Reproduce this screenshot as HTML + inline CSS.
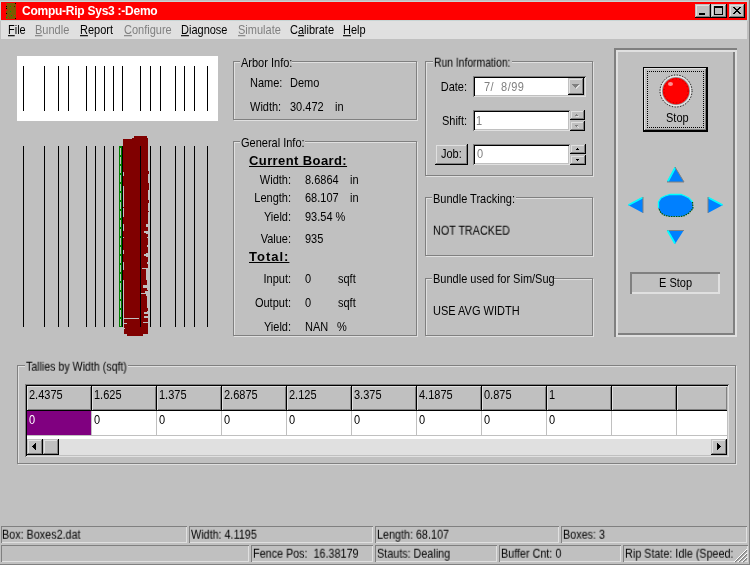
<!DOCTYPE html><html><head><meta charset="utf-8"><style>
*{margin:0;padding:0;box-sizing:content-box}
html,body{width:750px;height:565px;overflow:hidden;background:#c0c0c0}
body{position:relative;font-family:"Liberation Sans",sans-serif;font-size:11px;color:#000}
.t{will-change:transform;position:absolute;white-space:pre;line-height:13px;font-size:11px;transform:scaleY(1.125);transform-origin:0 10px}
.u{text-decoration:underline}
.dis{color:#808080}
</style></head><body>
<div style="position:absolute;left:0px;top:0px;width:750px;height:1px;background:#c0c0c0"></div>
<div style="position:absolute;left:0px;top:1px;width:748px;height:20px;background:#c8d4d4"></div>
<div style="position:absolute;left:749px;top:0px;width:1px;height:565px;background:#808080"></div>
<div style="position:absolute;left:0px;top:564px;width:750px;height:1px;background:#808080"></div>
<div style="position:absolute;left:1px;top:2px;width:746px;height:18px;background:#ff0000"></div>
<svg style="position:absolute;left:5px;top:2px" width="13" height="18" viewBox="0 0 13 18">
<polygon points="1,1 11,1 11,17 1,17 1,14 2,13 1,12 1,9 3,8 1,6 1,4 2,3" fill="#7c5a00"/>
<rect x="10" y="1" width="1" height="1" fill="#000"/><rect x="1" y="4" width="1" height="1" fill="#000"/>
<rect x="1" y="6" width="1" height="1" fill="#000"/><rect x="1" y="11" width="1" height="1" fill="#000"/>
<rect x="10" y="16" width="1" height="1" fill="#000"/><rect x="5" y="4" width="1" height="1" fill="#00a000"/>
<rect x="5" y="9" width="1" height="1" fill="#00a000"/><rect x="6" y="13" width="1" height="1" fill="#00a000"/>
<rect x="9" y="4" width="1" height="1" fill="#600000"/><rect x="9" y="13" width="1" height="1" fill="#ff0000"/>
<rect x="1" y="15" width="1" height="1" fill="#00a000"/><rect x="3" y="15" width="1" height="1" fill="#ff0000"/>
</svg>
<div class="t" style="left:22px;top:5px;color:#fff;font-weight:bold;font-size:12px;letter-spacing:-0.25px;transform:none">Compu-Rip Sys3 :-Demo</div>
<div style="position:absolute;left:695px;top:4px;width:16px;height:14px;background:#c0c0c0;box-shadow:inset -1px -1px #000,inset 1px 1px #c0c0c0,inset -2px -2px #808080,inset 2px 2px #e0e0e0"><div style="position:absolute;left:4px;top:9px;width:6px;height:2px;background:#000"></div></div>
<div style="position:absolute;left:711px;top:4px;width:16px;height:14px;background:#c0c0c0;box-shadow:inset -1px -1px #000,inset 1px 1px #c0c0c0,inset -2px -2px #808080,inset 2px 2px #e0e0e0"><div style="position:absolute;left:3px;top:2px;width:7px;height:6px;border:1px solid #000;border-top-width:2px"></div></div>
<div style="position:absolute;left:729px;top:4px;width:16px;height:14px;background:#c0c0c0;box-shadow:inset -1px -1px #000,inset 1px 1px #c0c0c0,inset -2px -2px #808080,inset 2px 2px #e0e0e0"></div>
<svg style="position:absolute;left:0;top:0;overflow:visible" width="1" height="1" shape-rendering="crispEdges"><rect x="733" y="7" width="2" height="1" fill="#000"/><rect x="739" y="7" width="2" height="1" fill="#000"/><rect x="734" y="8" width="2" height="1" fill="#000"/><rect x="738" y="8" width="2" height="1" fill="#000"/><rect x="735" y="9" width="4" height="1" fill="#000"/><rect x="736" y="10" width="2" height="1" fill="#000"/><rect x="735" y="11" width="4" height="1" fill="#000"/><rect x="734" y="12" width="2" height="1" fill="#000"/><rect x="738" y="12" width="2" height="1" fill="#000"/><rect x="733" y="13" width="2" height="1" fill="#000"/><rect x="739" y="13" width="2" height="1" fill="#000"/></svg>
<div style="position:absolute;left:1px;top:21px;width:746px;height:18px;background:#e0e0e0"></div>
<div class="t " style="left:8px;top:24px"><span class="u">F</span>ile</div>
<div class="t dis" style="left:35px;top:24px"><span class="u">B</span>undle</div>
<div class="t " style="left:80px;top:24px"><span class="u">R</span>eport</div>
<div class="t dis" style="left:124px;top:24px"><span class="u">C</span>onfigure</div>
<div class="t " style="left:181px;top:24px"><span class="u">D</span>iagnose</div>
<div class="t dis" style="left:238px;top:24px"><span class="u">S</span>imulate</div>
<div class="t " style="left:290px;top:24px">C<span class="u">a</span>librate</div>
<div class="t " style="left:343px;top:24px"><span class="u">H</span>elp</div>
<div style="position:absolute;left:17px;top:56px;width:201px;height:65px;background:#fff"></div>
<div style="position:absolute;left:23px;top:66px;width:1px;height:45px;background:#000"></div>
<div style="position:absolute;left:44px;top:66px;width:1px;height:45px;background:#000"></div>
<div style="position:absolute;left:58px;top:66px;width:1px;height:45px;background:#000"></div>
<div style="position:absolute;left:68px;top:66px;width:1px;height:45px;background:#000"></div>
<div style="position:absolute;left:86px;top:66px;width:1px;height:45px;background:#000"></div>
<div style="position:absolute;left:95px;top:66px;width:1px;height:45px;background:#000"></div>
<div style="position:absolute;left:104px;top:66px;width:1px;height:45px;background:#000"></div>
<div style="position:absolute;left:113px;top:66px;width:1px;height:45px;background:#000"></div>
<div style="position:absolute;left:122px;top:66px;width:1px;height:45px;background:#000"></div>
<div style="position:absolute;left:140px;top:66px;width:1px;height:45px;background:#000"></div>
<div style="position:absolute;left:150px;top:66px;width:1px;height:45px;background:#000"></div>
<div style="position:absolute;left:160px;top:66px;width:1px;height:45px;background:#000"></div>
<div style="position:absolute;left:175px;top:66px;width:1px;height:45px;background:#000"></div>
<div style="position:absolute;left:184px;top:66px;width:1px;height:45px;background:#000"></div>
<div style="position:absolute;left:194px;top:66px;width:1px;height:45px;background:#000"></div>
<div style="position:absolute;left:207px;top:66px;width:1px;height:45px;background:#000"></div>
<svg style="position:absolute;left:0;top:0" width="230" height="345" shape-rendering="crispEdges">
<rect x="134" y="136" width="13" height="2" fill="#800000"/>
<rect x="132" y="138" width="16" height="1" fill="#800000"/>
<rect x="123" y="139" width="25" height="10" fill="#800000"/>
<rect x="123" y="149" width="25" height="22" fill="#800000"/>
<rect x="123" y="171" width="26" height="3" fill="#800000"/>
<rect x="123" y="174" width="25" height="9" fill="#800000"/>
<rect x="123" y="183" width="26" height="7" fill="#800000"/>
<rect x="123" y="190" width="25" height="10" fill="#800000"/>
<rect x="123" y="200" width="26" height="3" fill="#800000"/>
<rect x="123" y="203" width="25" height="8" fill="#800000"/>
<rect x="123" y="211" width="26" height="1" fill="#800000"/>
<rect x="123" y="212" width="25" height="12" fill="#800000"/>
<rect x="123" y="224" width="23" height="3" fill="#800000"/>
<rect x="123" y="227" width="25" height="4" fill="#800000"/>
<rect x="123" y="231" width="21" height="2" fill="#800000"/>
<rect x="123" y="233" width="23" height="1" fill="#800000"/>
<rect x="123" y="234" width="25" height="3" fill="#800000"/>
<rect x="123" y="237" width="24" height="1" fill="#800000"/>
<rect x="123" y="238" width="25" height="7" fill="#800000"/>
<rect x="123" y="245" width="24" height="2" fill="#800000"/>
<rect x="123" y="247" width="25" height="6" fill="#800000"/>
<rect x="123" y="253" width="23" height="1" fill="#800000"/>
<rect x="123" y="254" width="21" height="2" fill="#800000"/>
<rect x="123" y="256" width="23" height="1" fill="#800000"/>
<rect x="123" y="257" width="25" height="5" fill="#800000"/>
<rect x="123" y="262" width="24" height="2" fill="#800000"/>
<rect x="123" y="264" width="25" height="4" fill="#800000"/>
<rect x="123" y="268" width="19" height="1" fill="#800000"/>
<rect x="123" y="269" width="23" height="2" fill="#800000"/>
<rect x="123" y="271" width="23" height="9" fill="#800000"/>
<rect x="124" y="280" width="23" height="5" fill="#800000"/>
<rect x="124" y="285" width="19" height="3" fill="#800000"/>
<rect x="124" y="288" width="23" height="2" fill="#800000"/>
<rect x="124" y="290" width="24" height="1" fill="#800000"/>
<rect x="124" y="291" width="21" height="2" fill="#800000"/>
<rect x="124" y="293" width="17" height="1" fill="#800000"/>
<rect x="124" y="294" width="22" height="2" fill="#800000"/>
<rect x="124" y="296" width="23" height="12" fill="#800000"/>
<rect x="124" y="308" width="24" height="3" fill="#800000"/>
<rect x="124" y="311" width="23" height="1" fill="#800000"/>
<rect x="124" y="312" width="20" height="2" fill="#800000"/>
<rect x="124" y="314" width="24" height="2" fill="#800000"/>
<rect x="124" y="316" width="20" height="2" fill="#800000"/>
<rect x="124" y="318" width="24" height="4" fill="#800000"/>
<rect x="124" y="322" width="19" height="1" fill="#800000"/>
<rect x="124" y="323" width="24" height="11" fill="#800000"/>
<rect x="127" y="334" width="16" height="2" fill="#800000"/>
<rect x="123" y="172" width="1" height="4" fill="#c0c0c0"/>
<rect x="123" y="186" width="1" height="21" fill="#c0c0c0"/>
<rect x="123" y="208" width="1" height="9" fill="#c0c0c0"/>
<rect x="123" y="224" width="1" height="7" fill="#c0c0c0"/>
<rect x="123" y="237" width="1" height="1" fill="#c0c0c0"/>
<rect x="123" y="250" width="1" height="4" fill="#c0c0c0"/>
<rect x="123" y="262" width="1" height="6" fill="#c0c0c0"/>
<rect x="123" y="268" width="1" height="2" fill="#c0c0c0"/>
<rect x="124" y="318" width="15" height="1" fill="#c0c0c0"/>
<rect x="124" y="323" width="3" height="1" fill="#c0c0c0"/><rect x="124" y="328" width="1" height="1" fill="#c0c0c0"/>
<rect x="119" y="146" width="3" height="181" fill="#008000"/>
<rect x="120" y="148" width="1" height="7" fill="#c0c0c0"/>
<rect x="120" y="157" width="1" height="7" fill="#c0c0c0"/>
<rect x="120" y="166" width="1" height="7" fill="#c0c0c0"/>
<rect x="120" y="175" width="1" height="7" fill="#c0c0c0"/>
<rect x="120" y="184" width="1" height="7" fill="#c0c0c0"/>
<rect x="120" y="193" width="1" height="7" fill="#c0c0c0"/>
<rect x="120" y="202" width="1" height="7" fill="#c0c0c0"/>
<rect x="120" y="211" width="1" height="7" fill="#c0c0c0"/>
<rect x="120" y="220" width="1" height="7" fill="#c0c0c0"/>
<rect x="120" y="229" width="1" height="7" fill="#c0c0c0"/>
<rect x="120" y="238" width="1" height="7" fill="#c0c0c0"/>
<rect x="120" y="247" width="1" height="7" fill="#c0c0c0"/>
<rect x="120" y="256" width="1" height="7" fill="#c0c0c0"/>
<rect x="120" y="265" width="1" height="7" fill="#c0c0c0"/>
<rect x="120" y="274" width="1" height="7" fill="#c0c0c0"/>
<rect x="120" y="283" width="1" height="7" fill="#c0c0c0"/>
<rect x="120" y="292" width="1" height="7" fill="#c0c0c0"/>
<rect x="120" y="301" width="1" height="7" fill="#c0c0c0"/>
<rect x="120" y="310" width="1" height="7" fill="#c0c0c0"/>
<rect x="120" y="319" width="1" height="7" fill="#c0c0c0"/>
</svg>
<div style="position:absolute;left:23px;top:146px;width:1px;height:181px;background:#000"></div>
<div style="position:absolute;left:44px;top:146px;width:1px;height:181px;background:#000"></div>
<div style="position:absolute;left:58px;top:146px;width:1px;height:181px;background:#000"></div>
<div style="position:absolute;left:68px;top:146px;width:1px;height:181px;background:#000"></div>
<div style="position:absolute;left:86px;top:146px;width:1px;height:181px;background:#000"></div>
<div style="position:absolute;left:95px;top:146px;width:1px;height:181px;background:#000"></div>
<div style="position:absolute;left:104px;top:146px;width:1px;height:181px;background:#000"></div>
<div style="position:absolute;left:113px;top:146px;width:1px;height:181px;background:#000"></div>
<div style="position:absolute;left:122px;top:146px;width:1px;height:181px;background:#000"></div>
<div style="position:absolute;left:140px;top:146px;width:1px;height:181px;background:#000"></div>
<div style="position:absolute;left:150px;top:146px;width:1px;height:181px;background:#000"></div>
<div style="position:absolute;left:160px;top:146px;width:1px;height:181px;background:#000"></div>
<div style="position:absolute;left:175px;top:146px;width:1px;height:181px;background:#000"></div>
<div style="position:absolute;left:184px;top:146px;width:1px;height:181px;background:#000"></div>
<div style="position:absolute;left:194px;top:146px;width:1px;height:181px;background:#000"></div>
<div style="position:absolute;left:207px;top:146px;width:1px;height:181px;background:#000"></div>
<div style="position:absolute;left:234px;top:62px;width:182px;height:57px;border:1px solid #e0e0e0"></div>
<div style="position:absolute;left:233px;top:61px;width:182px;height:57px;border:1px solid #808080"></div>
<div style="position:absolute;left:240px;top:59px;width:52px;height:5px;background:#c0c0c0"></div>
<div class="t" style="left:241px;top:57px;">Arbor Info:</div>
<div class="t" style="left:250px;top:77px;">Name:</div>
<div class="t" style="left:290px;top:77px;">Demo</div>
<div class="t" style="left:250px;top:101px;">Width:</div>
<div class="t" style="left:290px;top:101px;">30.472</div>
<div class="t" style="left:335px;top:101px;">in</div>
<div style="position:absolute;left:234px;top:142px;width:182px;height:193px;border:1px solid #e0e0e0"></div>
<div style="position:absolute;left:233px;top:141px;width:182px;height:193px;border:1px solid #808080"></div>
<div style="position:absolute;left:240px;top:139px;width:65px;height:5px;background:#c0c0c0"></div>
<div class="t" style="left:241px;top:137px;">General Info:</div>
<div class="t" style="left:249px;top:153px;font-weight:bold;font-size:13px;line-height:15px;text-decoration:underline;transform:none;letter-spacing:0.4px">Current Board:</div>
<div class="t" style="left:191px;top:174px;width:100px;text-align:right">Width:</div>
<div class="t" style="left:305px;top:174px;">8.6864</div>
<div class="t" style="left:350px;top:174px;">in</div>
<div class="t" style="left:191px;top:192px;width:100px;text-align:right">Length:</div>
<div class="t" style="left:305px;top:192px;">68.107</div>
<div class="t" style="left:350px;top:192px;">in</div>
<div class="t" style="left:191px;top:211px;width:100px;text-align:right">Yield:</div>
<div class="t" style="left:305px;top:211px;">93.54 %</div>
<div class="t" style="left:191px;top:233px;width:100px;text-align:right">Value:</div>
<div class="t" style="left:305px;top:233px;">935</div>
<div class="t" style="left:249px;top:249px;font-weight:bold;font-size:13px;line-height:15px;text-decoration:underline;transform:none;letter-spacing:1px">Total:</div>
<div class="t" style="left:191px;top:273px;width:100px;text-align:right">Input:</div>
<div class="t" style="left:305px;top:273px;">0</div>
<div class="t" style="left:338px;top:273px;">sqft</div>
<div class="t" style="left:191px;top:297px;width:100px;text-align:right">Output:</div>
<div class="t" style="left:305px;top:297px;">0</div>
<div class="t" style="left:338px;top:297px;">sqft</div>
<div class="t" style="left:191px;top:321px;width:100px;text-align:right">Yield:</div>
<div class="t" style="left:305px;top:321px;">NAN</div>
<div class="t" style="left:337px;top:321px;">%</div>
<div style="position:absolute;left:426px;top:62px;width:166px;height:113px;border:1px solid #e0e0e0"></div>
<div style="position:absolute;left:425px;top:61px;width:166px;height:113px;border:1px solid #808080"></div>
<div style="position:absolute;left:433px;top:59px;width:79px;height:5px;background:#c0c0c0"></div>
<div class="t" style="left:434px;top:57px;transform:scale(0.94,1.125)">Run Information:</div>
<div class="t" style="left:367px;top:81px;width:100px;text-align:right">Date:</div>
<div style="position:absolute;left:473px;top:76px;width:113px;height:21px;background:#fff;box-shadow:inset 1px 1px #808080,inset -1px -1px #e0e0e0,inset 2px 2px #000,inset -2px -2px #c0c0c0"></div>
<div style="position:absolute;left:568px;top:78px;width:16px;height:17px;background:#c0c0c0;box-shadow:inset -1px -1px #000,inset 1px 1px #c0c0c0,inset -2px -2px #808080,inset 2px 2px #e0e0e0"></div>
<svg style="position:absolute;left:0;top:0;overflow:visible" width="1" height="1" shape-rendering="crispEdges"><rect x="573" y="85" width="7" height="1" fill="#e0e0e0"/><rect x="574" y="86" width="5" height="1" fill="#e0e0e0"/><rect x="575" y="87" width="3" height="1" fill="#e0e0e0"/><rect x="576" y="88" width="1" height="1" fill="#e0e0e0"/></svg>
<svg style="position:absolute;left:0;top:0;overflow:visible" width="1" height="1" shape-rendering="crispEdges"><rect x="572" y="84" width="7" height="1" fill="#808080"/><rect x="573" y="85" width="5" height="1" fill="#808080"/><rect x="574" y="86" width="3" height="1" fill="#808080"/><rect x="575" y="87" width="1" height="1" fill="#808080"/></svg>
<div class="t" style="left:484px;top:81px;color:#808080;letter-spacing:0.45px">7/  8/99</div>
<div class="t" style="left:367px;top:115px;width:100px;text-align:right">Shift:</div>
<div style="position:absolute;left:473px;top:110px;width:97px;height:21px;background:#fff;box-shadow:inset 1px 1px #808080,inset -1px -1px #e0e0e0,inset 2px 2px #000,inset -2px -2px #c0c0c0"></div>
<div class="t" style="left:476px;top:115px;color:#808080">1</div>
<div style="position:absolute;left:570px;top:110px;width:15px;height:10px;background:#c0c0c0;box-shadow:inset -1px -1px #000,inset 1px 1px #c0c0c0,inset -2px -2px #808080,inset 2px 2px #e0e0e0"></div>
<div style="position:absolute;left:570px;top:121px;width:15px;height:10px;background:#c0c0c0;box-shadow:inset -1px -1px #000,inset 1px 1px #c0c0c0,inset -2px -2px #808080,inset 2px 2px #e0e0e0"></div>
<svg style="position:absolute;left:0;top:0;overflow:visible" width="1" height="1" shape-rendering="crispEdges"><rect x="576" y="116" width="3" height="1" fill="#e0e0e0"/></svg>
<svg style="position:absolute;left:0;top:0;overflow:visible" width="1" height="1" shape-rendering="crispEdges"><rect x="576" y="114" width="1" height="1" fill="#808080"/><rect x="575" y="115" width="3" height="1" fill="#808080"/></svg>
<svg style="position:absolute;left:0;top:0;overflow:visible" width="1" height="1" shape-rendering="crispEdges"><rect x="578" y="127" width="1" height="1" fill="#e0e0e0"/><rect x="577" y="126" width="1" height="1" fill="#e0e0e0"/></svg>
<svg style="position:absolute;left:0;top:0;overflow:visible" width="1" height="1" shape-rendering="crispEdges"><rect x="575" y="125" width="3" height="1" fill="#808080"/><rect x="576" y="126" width="1" height="1" fill="#808080"/></svg>
<div style="position:absolute;left:435px;top:144px;width:33px;height:21px;background:#c0c0c0;box-shadow:inset -1px -1px #000,inset 1px 1px #c0c0c0,inset -2px -2px #808080,inset 2px 2px #e0e0e0"></div>
<div class="t" style="left:441px;top:148px;">Job:</div>
<div style="position:absolute;left:473px;top:144px;width:97px;height:21px;background:#fff;box-shadow:inset 1px 1px #808080,inset -1px -1px #e0e0e0,inset 2px 2px #000,inset -2px -2px #c0c0c0"></div>
<div class="t" style="left:477px;top:148px;color:#808080">0</div>
<div style="position:absolute;left:570px;top:144px;width:16px;height:10px;background:#c0c0c0;box-shadow:inset -1px -1px #000,inset 1px 1px #c0c0c0,inset -2px -2px #808080,inset 2px 2px #e0e0e0"></div>
<div style="position:absolute;left:570px;top:155px;width:16px;height:10px;background:#c0c0c0;box-shadow:inset -1px -1px #000,inset 1px 1px #c0c0c0,inset -2px -2px #808080,inset 2px 2px #e0e0e0"></div>
<svg style="position:absolute;left:0;top:0;overflow:visible" width="1" height="1" shape-rendering="crispEdges"><rect x="577" y="148" width="1" height="1" fill="#000"/><rect x="576" y="149" width="3" height="1" fill="#000"/></svg>
<svg style="position:absolute;left:0;top:0;overflow:visible" width="1" height="1" shape-rendering="crispEdges"><rect x="576" y="159" width="3" height="1" fill="#000"/><rect x="577" y="160" width="1" height="1" fill="#000"/></svg>
<div style="position:absolute;left:426px;top:198px;width:166px;height:57px;border:1px solid #e0e0e0"></div>
<div style="position:absolute;left:425px;top:197px;width:166px;height:57px;border:1px solid #808080"></div>
<div style="position:absolute;left:432px;top:195px;width:84px;height:5px;background:#c0c0c0"></div>
<div class="t" style="left:433px;top:193px;">Bundle Tracking:</div>
<div class="t" style="left:433px;top:225px;transform:scale(0.98,1.125)">NOT TRACKED</div>
<div style="position:absolute;left:426px;top:279px;width:166px;height:56px;border:1px solid #e0e0e0"></div>
<div style="position:absolute;left:425px;top:278px;width:166px;height:56px;border:1px solid #808080"></div>
<div style="position:absolute;left:432px;top:276px;width:122px;height:5px;background:#c0c0c0"></div>
<div class="t" style="left:433px;top:273px;">Bundle used for Sim/Sug</div>
<div class="t" style="left:433px;top:305px;">USE AVG WIDTH</div>
<div style="position:absolute;left:614px;top:48px;width:123px;height:289px;box-shadow:inset 2px 2px #808080,inset -2px -2px #e0e0e0,inset 4px 4px #e0e0e0,inset -4px -4px #808080"></div>
<div style="position:absolute;left:643px;top:67px;width:65px;height:65px;background:#c0c0c0;box-shadow:inset -1px -1px #000,inset 1px 1px #000,inset -2px -2px #000,inset 2px 2px #e0e0e0,inset -3px -3px #808080"></div>
<div style="position:absolute;left:647px;top:71px;width:55px;height:55px;border:1px dotted #000"></div>
<svg style="position:absolute;left:655px;top:70px" width="42" height="42">
<circle cx="21" cy="21" r="16" fill="none" stroke="#000" stroke-width="1" stroke-dasharray="1.2 1.6"/><circle cx="21" cy="21" r="15.3" fill="#e8e8e8"/><circle cx="21" cy="21" r="14" fill="#949494"/><circle cx="21" cy="21" r="13.2" fill="#ff0000"/><circle cx="21" cy="21" r="12" fill="none" stroke="#900000" stroke-width="0.8" stroke-dasharray="1 2.5"/>
<ellipse cx="15.5" cy="14" rx="2.5" ry="2" fill="#ff9090"/>
</svg>
<div class="t" style="left:666px;top:112px;">Stop</div>
<svg style="position:absolute;left:620px;top:160px" width="110" height="90">
<polygon points="55,7 47,22 64,22" fill="#0080ff"/><path d="M55.3,7.5 L47.8,21.5" stroke="#00ffff" stroke-width="1.8"/><path d="M55,7 L64,22 L47,22" fill="none" stroke="#808080" stroke-width="1"/>
<polygon points="55,84 47,70 64,70" fill="#0080ff"/><path d="M47,70.5 L64,70.5" stroke="#808080" stroke-width="1"/><path d="M55,83.5 L47.5,70.5" stroke="#00ffff" stroke-width="1.8"/>
<polygon points="8,45 23,37 23,53" fill="#0080ff"/><path d="M8.5,45 L23,37.5" stroke="#00ffff" stroke-width="1.8"/><path d="M23,37 L23,53" stroke="#808080" stroke-width="1"/>
<polygon points="103,45 88,37 88,53" fill="#0080ff"/><path d="M102.5,45 L88,37.5" stroke="#00ffff" stroke-width="1.8"/><path d="M88,37 L88,53" stroke="#808080" stroke-width="1"/>
<polygon points="38.5,48.0 38.5,42.0 41.0,38.0 45.0,36.0 50.0,34.5 61.0,34.5 65.0,36.0 69.0,38.0 72.5,42.0 73.0,48.5 69.0,53.0 65.0,55.5 61.0,56.5 50.0,56.5 45.0,55.5 41.0,53.0" fill="#0080ff"/>
<path d="M38.5,48.0 L38.5,42.0 L41.0,38.0 L45.0,36.0 L50.0,34.5 L61.0,34.5 L65.0,36.0 L69.0,38.0 L72.5,42.0" fill="none" stroke="#00ffff" stroke-width="1.3"/>
<path d="M72.5,42.0 L73.0,48.5 L69.0,53.0 L65.0,55.5 L61.0,56.5 L50.0,56.5 L45.0,55.5 L41.0,53.0 L38.5,48.0" fill="none" stroke="#005800" stroke-width="1.2" stroke-dasharray="1.5 1"/>
</svg>
<div style="position:absolute;left:630px;top:272px;width:90px;height:22px;box-shadow:inset 2px 2px #808080,inset -2px -2px #e0e0e0"></div>
<div class="t" style="left:659px;top:277px;">E Stop</div>
<div style="position:absolute;left:18px;top:366px;width:717px;height:97px;border:1px solid #e0e0e0"></div>
<div style="position:absolute;left:17px;top:365px;width:717px;height:97px;border:1px solid #808080"></div>
<div style="position:absolute;left:25px;top:363px;width:103px;height:5px;background:#c0c0c0"></div>
<div class="t" style="left:26px;top:361px;transform:scale(0.965,1.125)">Tallies by Width (sqft)</div>
<div style="position:absolute;left:25px;top:384px;width:704px;height:73px;background:#fff;box-shadow:inset 1px 1px #808080,inset -1px -1px #e0e0e0,inset 2px 2px #000,inset -2px -2px #c0c0c0"></div>
<div style="position:absolute;left:27px;top:386px;width:64px;height:24px;background:#c0c0c0;box-shadow:inset 1px 1px #e0e0e0,inset -1px -1px #808080"></div>
<div class="t" style="left:29px;top:389px;">2.4375</div>
<div style="position:absolute;left:91px;top:386px;width:1px;height:24px;background:#000"></div>
<div style="position:absolute;left:27px;top:411px;width:64px;height:24px;background:#800080"></div>
<div class="t" style="left:29px;top:414px;color:#fff">0</div>
<div style="position:absolute;left:91px;top:411px;width:1px;height:24px;background:#c0c0c0"></div>
<div style="position:absolute;left:92px;top:386px;width:64px;height:24px;background:#c0c0c0;box-shadow:inset 1px 1px #e0e0e0,inset -1px -1px #808080"></div>
<div class="t" style="left:94px;top:389px;">1.625</div>
<div style="position:absolute;left:156px;top:386px;width:1px;height:24px;background:#000"></div>
<div class="t" style="left:94px;top:414px;">0</div>
<div style="position:absolute;left:156px;top:411px;width:1px;height:24px;background:#c0c0c0"></div>
<div style="position:absolute;left:157px;top:386px;width:64px;height:24px;background:#c0c0c0;box-shadow:inset 1px 1px #e0e0e0,inset -1px -1px #808080"></div>
<div class="t" style="left:159px;top:389px;">1.375</div>
<div style="position:absolute;left:221px;top:386px;width:1px;height:24px;background:#000"></div>
<div class="t" style="left:159px;top:414px;">0</div>
<div style="position:absolute;left:221px;top:411px;width:1px;height:24px;background:#c0c0c0"></div>
<div style="position:absolute;left:222px;top:386px;width:64px;height:24px;background:#c0c0c0;box-shadow:inset 1px 1px #e0e0e0,inset -1px -1px #808080"></div>
<div class="t" style="left:224px;top:389px;">2.6875</div>
<div style="position:absolute;left:286px;top:386px;width:1px;height:24px;background:#000"></div>
<div class="t" style="left:224px;top:414px;">0</div>
<div style="position:absolute;left:286px;top:411px;width:1px;height:24px;background:#c0c0c0"></div>
<div style="position:absolute;left:287px;top:386px;width:64px;height:24px;background:#c0c0c0;box-shadow:inset 1px 1px #e0e0e0,inset -1px -1px #808080"></div>
<div class="t" style="left:289px;top:389px;">2.125</div>
<div style="position:absolute;left:351px;top:386px;width:1px;height:24px;background:#000"></div>
<div class="t" style="left:289px;top:414px;">0</div>
<div style="position:absolute;left:351px;top:411px;width:1px;height:24px;background:#c0c0c0"></div>
<div style="position:absolute;left:352px;top:386px;width:64px;height:24px;background:#c0c0c0;box-shadow:inset 1px 1px #e0e0e0,inset -1px -1px #808080"></div>
<div class="t" style="left:354px;top:389px;">3.375</div>
<div style="position:absolute;left:416px;top:386px;width:1px;height:24px;background:#000"></div>
<div class="t" style="left:354px;top:414px;">0</div>
<div style="position:absolute;left:416px;top:411px;width:1px;height:24px;background:#c0c0c0"></div>
<div style="position:absolute;left:417px;top:386px;width:64px;height:24px;background:#c0c0c0;box-shadow:inset 1px 1px #e0e0e0,inset -1px -1px #808080"></div>
<div class="t" style="left:419px;top:389px;">4.1875</div>
<div style="position:absolute;left:481px;top:386px;width:1px;height:24px;background:#000"></div>
<div class="t" style="left:419px;top:414px;">0</div>
<div style="position:absolute;left:481px;top:411px;width:1px;height:24px;background:#c0c0c0"></div>
<div style="position:absolute;left:482px;top:386px;width:64px;height:24px;background:#c0c0c0;box-shadow:inset 1px 1px #e0e0e0,inset -1px -1px #808080"></div>
<div class="t" style="left:484px;top:389px;">0.875</div>
<div style="position:absolute;left:546px;top:386px;width:1px;height:24px;background:#000"></div>
<div class="t" style="left:484px;top:414px;">0</div>
<div style="position:absolute;left:546px;top:411px;width:1px;height:24px;background:#c0c0c0"></div>
<div style="position:absolute;left:547px;top:386px;width:64px;height:24px;background:#c0c0c0;box-shadow:inset 1px 1px #e0e0e0,inset -1px -1px #808080"></div>
<div class="t" style="left:549px;top:389px;">1</div>
<div style="position:absolute;left:611px;top:386px;width:1px;height:24px;background:#000"></div>
<div class="t" style="left:549px;top:414px;">0</div>
<div style="position:absolute;left:611px;top:411px;width:1px;height:24px;background:#c0c0c0"></div>
<div style="position:absolute;left:612px;top:386px;width:64px;height:24px;background:#c0c0c0;box-shadow:inset 1px 1px #e0e0e0,inset -1px -1px #808080"></div>
<div style="position:absolute;left:676px;top:386px;width:1px;height:24px;background:#000"></div>
<div style="position:absolute;left:676px;top:411px;width:1px;height:24px;background:#c0c0c0"></div>
<div style="position:absolute;left:677px;top:386px;width:50px;height:24px;background:#c0c0c0;box-shadow:inset 1px 1px #e0e0e0,inset -1px -1px #808080"></div>
<div style="position:absolute;left:27px;top:410px;width:700px;height:1px;background:#000"></div>
<div style="position:absolute;left:27px;top:435px;width:700px;height:1px;background:#c0c0c0"></div>
<div style="position:absolute;left:27px;top:439px;width:700px;height:16px;background:#e0e0e0"></div>
<div style="position:absolute;left:27px;top:439px;width:16px;height:16px;background:#c0c0c0;box-shadow:inset -1px -1px #000,inset 1px 1px #c0c0c0,inset -2px -2px #808080,inset 2px 2px #e0e0e0"></div>
<div style="position:absolute;left:43px;top:439px;width:16px;height:16px;background:#c0c0c0;box-shadow:inset -1px -1px #000,inset 1px 1px #c0c0c0,inset -2px -2px #808080,inset 2px 2px #e0e0e0"></div>
<div style="position:absolute;left:711px;top:439px;width:16px;height:16px;background:#c0c0c0;box-shadow:inset -1px -1px #000,inset 1px 1px #c0c0c0,inset -2px -2px #808080,inset 2px 2px #e0e0e0"></div>
<svg style="position:absolute;left:0;top:0;overflow:visible" width="1" height="1" shape-rendering="crispEdges"><rect x="32" y="446" width="1" height="1" fill="#000"/><rect x="33" y="445" width="1" height="3" fill="#000"/><rect x="34" y="444" width="1" height="5" fill="#000"/><rect x="35" y="443" width="1" height="7" fill="#000"/></svg>
<svg style="position:absolute;left:0;top:0;overflow:visible" width="1" height="1" shape-rendering="crispEdges"><rect x="717" y="443" width="1" height="7" fill="#000"/><rect x="718" y="444" width="1" height="5" fill="#000"/><rect x="719" y="445" width="1" height="3" fill="#000"/><rect x="720" y="446" width="1" height="1" fill="#000"/></svg>
<div style="position:absolute;left:1px;top:526px;width:186px;height:17px;box-shadow:inset 1px 1px #808080,inset -1px -1px #e0e0e0"></div>
<div class="t" style="left:2px;top:529px;transform:scale(0.98,1.125)">Box: Boxes2.dat</div>
<div style="position:absolute;left:189px;top:526px;width:184px;height:17px;box-shadow:inset 1px 1px #808080,inset -1px -1px #e0e0e0"></div>
<div class="t" style="left:191px;top:529px;transform:scale(0.98,1.125)">Width: 4.1195</div>
<div style="position:absolute;left:375px;top:526px;width:184px;height:17px;box-shadow:inset 1px 1px #808080,inset -1px -1px #e0e0e0"></div>
<div class="t" style="left:377px;top:529px;transform:scale(0.98,1.125)">Length: 68.107</div>
<div style="position:absolute;left:561px;top:526px;width:186px;height:17px;box-shadow:inset 1px 1px #808080,inset -1px -1px #e0e0e0"></div>
<div class="t" style="left:563px;top:529px;transform:scale(0.98,1.125)">Boxes: 3</div>
<div style="position:absolute;left:1px;top:545px;width:248px;height:17px;box-shadow:inset 1px 1px #808080,inset -1px -1px #e0e0e0"></div>
<div style="position:absolute;left:251px;top:545px;width:122px;height:17px;box-shadow:inset 1px 1px #808080,inset -1px -1px #e0e0e0"></div>
<div class="t" style="left:253px;top:548px;transform:scale(0.98,1.125)">Fence Pos:  16.38179</div>
<div style="position:absolute;left:375px;top:545px;width:122px;height:17px;box-shadow:inset 1px 1px #808080,inset -1px -1px #e0e0e0"></div>
<div class="t" style="left:377px;top:548px;transform:scale(0.98,1.125)">Stauts: Dealing</div>
<div style="position:absolute;left:499px;top:545px;width:122px;height:17px;box-shadow:inset 1px 1px #808080,inset -1px -1px #e0e0e0"></div>
<div class="t" style="left:501px;top:548px;transform:scale(0.98,1.125)">Buffer Cnt: 0</div>
<div style="position:absolute;left:623px;top:545px;width:125px;height:17px;box-shadow:inset 1px 1px #808080,inset -1px -1px #e0e0e0"></div>
<div class="t" style="left:625px;top:548px;transform:scale(0.98,1.125)">Rip State: Idle (Speed:</div>
<svg style="position:absolute;left:734px;top:549px" width="14" height="14">
<path d="M13,1 L1,13 M13,5 L5,13 M13,9 L9,13" stroke="#808080" stroke-width="1.5"/>
<path d="M13,0 L0,13 M13,4 L4,13 M13,8 L8,13" stroke="#fff" stroke-width="1"/>
</svg>
</body></html>
